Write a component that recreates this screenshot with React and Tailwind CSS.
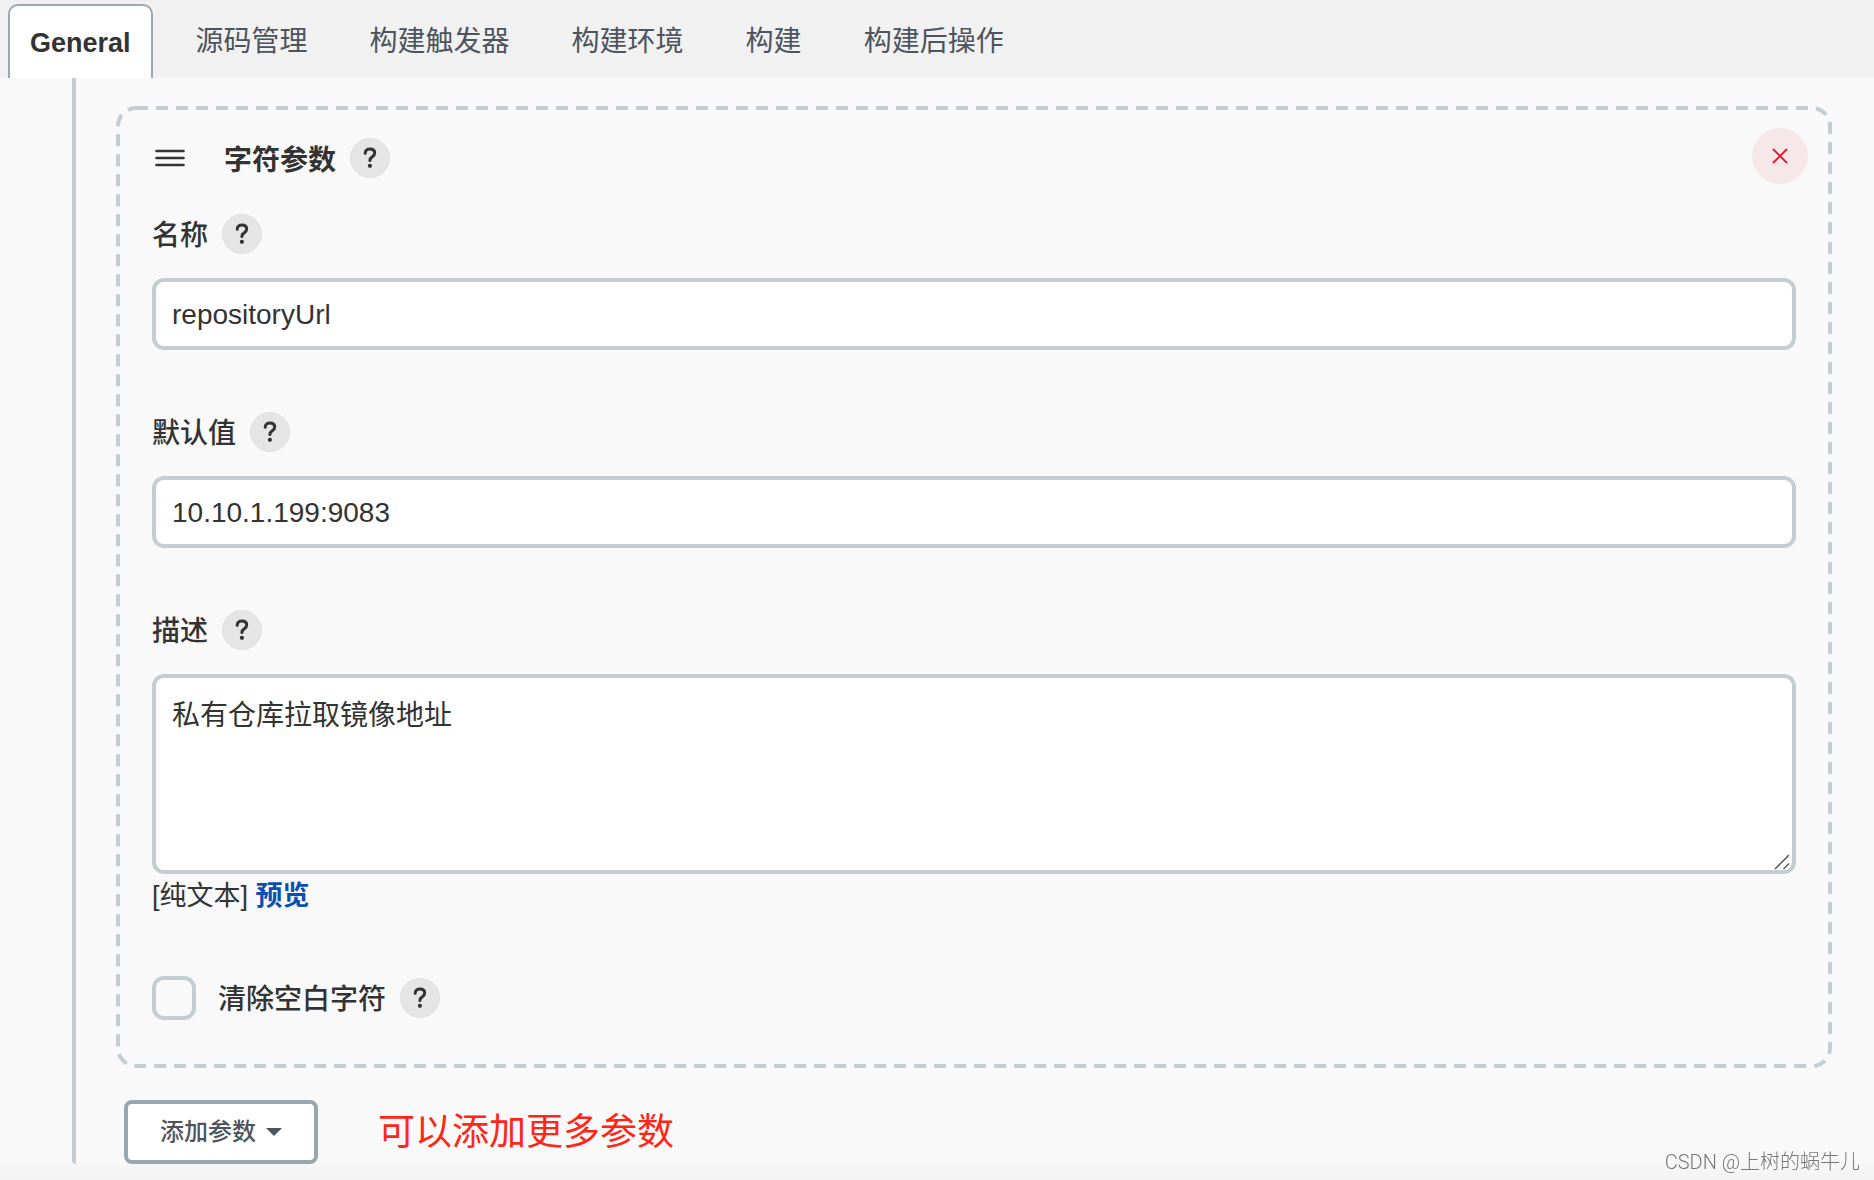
import { useState } from "react";

const tabs = ["源码管理", "构建触发器", "构建环境", "构建", "构建后操作"];

const HelpButton = ({ label }) => {
  return (
    <button
      type="button"
      aria-label={`${label} 帮助`}
      className="flex h-10 w-10 shrink-0 items-center justify-center rounded-full border border-[#e0e0e0] bg-[#e5e5e5] text-[#333]"
    >
      <svg width="14" height="22" viewBox="0 0 14 22" fill="none">
        <path
          d="M2.2 6.2C2.2 3.6 4.2 2 6.9 2c2.8 0 4.8 1.5 4.8 4 0 1.900-1 2.800-2.400 3.800C7.600 10.900 6.900 11.700 6.900 13.400"
          stroke="currentColor"
          strokeWidth="3"
          strokeLinecap="round"
          strokeLinejoin="round"
        />
        <circle cx="6.9" cy="18.800" r="2.1" fill="currentColor" />
      </svg>
    </button>
  );
};

const FieldLabel = ({ htmlFor, children }) => {
  return (
    <div className="mb-6 flex h-10 items-center gap-3.5">
      <label htmlFor={htmlFor} className="pt-1 font-medium">{children}</label>
      <HelpButton label={children} />
    </div>
  );
};

// dashed outline, 12px dash and 8px gap
const DashedFrame = () => {
  return (
    <svg className="pointer-events-none absolute inset-0 h-full w-full" fill="none" aria-hidden="true">
      <rect
        x="2"
        y="2"
        rx="18"
        className="h-[calc(100%-4px)] w-[calc(100%-4px)]"
        stroke="#c3cdd2"
        strokeWidth="4"
        strokeDasharray="12 8"
      />
    </svg>
  );
};

const App = () => {
  const [name, setName] = useState("repositoryUrl");
  const [defaultValue, setDefaultValue] = useState("10.10.1.199:9083");
  const [description, setDescription] = useState("私有仓库拉取镜像地址");
  const [trim, setTrim] = useState(false);

  return (
    <div className="flex min-h-screen flex-col bg-linear-to-b from-[#f9f9f9] from-98% to-[#f3f3f3] font-['Liberation_Sans','Noto_Sans_CJK_SC',sans-serif] text-[28px] leading-10 text-[#333]">
      <nav className="flex h-[78px] items-end bg-[#f1f1f1] pl-2">
        <button
          type="button"
          className="mr-3 h-[74px] rounded-t-[10px] border-2 border-b-0 border-[#9aa8b4] bg-white px-5 pt-0.5 text-[27px] font-bold"
        >
          General
        </button>
        {tabs.map((tab) => (
          <button key={tab} type="button" className="h-[73px] px-[31px] text-[#4d545d]">
            {tab}
          </button>
        ))}
      </nav>

      <main className="flex-1 pr-[42px] pb-4 pl-[72px]">
        <div className="rounded-b-sm border-l-4 border-[#c3cdd2] pt-7 pl-10">
          <section className="relative px-9 pt-8 pb-12">
            <DashedFrame />
            <button
              type="button"
              aria-label="删除"
              className="absolute top-[22px] right-6 flex h-14 w-14 items-center justify-center rounded-full bg-[#f6e7e8] text-[#e6142d]"
            >
              <svg width="16" height="16" viewBox="0 0 16 16" stroke="currentColor" strokeWidth="1.800" strokeLinecap="round">
                <path d="M1.500 1.500l13 13M14.500 1.500l-13 13" />
              </svg>
            </button>

            <div className="mb-9 flex h-10 items-center pl-[3px]">
              <svg width="30" height="18" viewBox="0 0 30 18" stroke="#333" strokeWidth="2.600" strokeLinecap="round">
                <path d="M1.500 2h27M1.500 9h27M1.500 16h27" />
              </svg>
              <h2 className="mr-3.5 ml-[39px] pt-1.5 font-bold">字符参数</h2>
              <HelpButton label="字符参数" />
            </div>

            <FieldLabel htmlFor="name">名称</FieldLabel>
            <input
              id="name"
              type="text"
              value={name}
              onChange={(e) => setName(e.target.value)}
              className="mb-[62px] block h-[72px] w-full rounded-xl border-4 border-[#c3cdd2] bg-white px-4 pt-0.5 outline-none"
            />

            <FieldLabel htmlFor="default">默认值</FieldLabel>
            <input
              id="default"
              type="text"
              value={defaultValue}
              onChange={(e) => setDefaultValue(e.target.value)}
              className="mb-[62px] block h-[72px] w-full rounded-xl border-4 border-[#c3cdd2] bg-white px-4 pt-0.5 outline-none"
            />

            <FieldLabel htmlFor="description">描述</FieldLabel>
            <div className="relative">
              <textarea
                id="description"
                value={description}
                onChange={(e) => setDescription(e.target.value)}
                className="block h-[200px] w-full resize-none rounded-xl border-4 border-[#c3cdd2] bg-white px-4 pt-[18px] pb-4 outline-none"
              />
              <svg
                className="pointer-events-none absolute right-1.5 bottom-1"
                width="16"
                height="16"
                viewBox="0 0 16 16"
                stroke="#555"
                strokeWidth="1.500"
              >
                <path d="M1 15L15 1M9.500 15L15 9.500" />
              </svg>
            </div>
            <p className="mt-0.5 mb-[60px] text-[27px]">
              [纯文本] <a href="#preview" className="font-bold text-[#0b4fb3]">预览</a>
            </p>

            <div className="flex h-11 items-center">
              <input
                id="trim"
                type="checkbox"
                checked={trim}
                onChange={(e) => setTrim(e.target.checked)}
                className="h-11 w-11 appearance-none rounded-xl border-4 border-[#c3cdd2] checked:bg-[#0b4fb3]"
              />
              <label htmlFor="trim" className="mr-3.5 ml-[22px] pt-1 font-medium">清除空白字符</label>
              <HelpButton label="清除空白字符" />
            </div>
          </section>

          <div className="mt-8 ml-2 flex items-center">
            <button
              type="button"
              className="flex h-16 items-center gap-2.5 rounded-lg border-4 border-[#9aa6ae] bg-white px-8 text-2xl font-medium text-[#4d545d]"
            >
              添加参数
              <svg width="16" height="8" viewBox="0 0 16 8" fill="currentColor">
                <path d="M0 0h16L8 8z" />
              </svg>
            </button>
            <p className="ml-[60px] pt-0.5 text-[37px] text-[#fe2617]">可以添加更多参数</p>
          </div>
        </div>
      </main>

      <footer className="pointer-events-none fixed right-0 bottom-0 left-0 flex h-[30px] justify-end pr-3.5 font-['Roboto','Noto_Sans_CJK_SC',sans-serif] text-xl leading-6 font-light text-[#777]">
        CSDN @上树的蜗牛儿
      </footer>
    </div>
  );
};

export default App;
